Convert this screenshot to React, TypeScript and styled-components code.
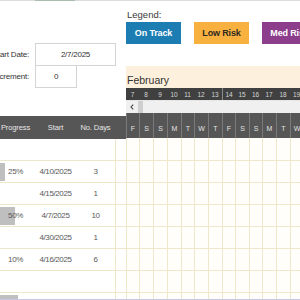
import React from "react";
import styled, { createGlobalStyle } from "styled-components";

const GlobalStyle = createGlobalStyle`
  html, body { margin: 0; padding: 0; background: #ffffff; }
  body { font-family: "Liberation Sans", Arial, sans-serif; }
  * { box-sizing: border-box; }
`;

const GRID_LINE = "#efe7c9";
const COLS = [13, 14, 14, 14, 13, 14, 14, 13, 14, 13, 14, 14, 13];
const COL_TEMPLATE = COLS.map((w) => `${w}px`).join(" ");
const DAYS = [7, 8, 9, 10, 11, 12, 13, 14, 15, 16, 17, 18, 19];
const LETTERS = ["F", "S", "S", "M", "T", "W", "T", "F", "S", "S", "M", "T", "W"];

type Task = { progress?: number; start?: string; days?: string };
const TASKS: Task[] = [
  {},
  { progress: 5, start: "4/10/2025", days: "3" },
  { start: "4/15/2025", days: "1" },
  { progress: 15, start: "4/7/2025", days: "10" },
  { start: "4/30/2025", days: "1" },
  { progress: 0, start: "4/16/2025", days: "6" },
  {},
];
const PCT = ["", "25%", "", "50%", "", "10%", ""];

const Page = styled.div`
  width: 300px;
  height: 300px;
  overflow: hidden;
  background: #ffffff;
  display: flex;
  flex-direction: column;
  border-bottom: 1px solid #c8c8e2;
`;

const TopRule = styled.div`
  height: 1px;
  flex-shrink: 0;
  background: #dcdcdc;
  display: flex;
`;

const RuleSegment = styled.div`
  margin-left: 35px;
  width: 40px;
  background: #a9bcae;
`;

const Main = styled.div`
  flex: 1;
  display: flex;
  overflow: hidden;
`;

const LeftPane = styled.div`
  width: 126px;
  flex-shrink: 0;
  display: flex;
  flex-direction: column;
`;

const FormArea = styled.div`
  height: 115px;
  padding-top: 42px;
  flex-shrink: 0;
`;

const FormRow = styled.div`
  height: 22px;
  display: flex;
  align-items: flex-start;
`;

const FieldLabel = styled.div`
  width: 35px;
  height: 23px;
  padding-right: 6px;
  display: flex;
  justify-content: flex-end;
  align-items: center;
  overflow: hidden;
  white-space: nowrap;
  font-size: 8px;
  letter-spacing: -0.2px;
  color: #333333;
`;

const FieldBox = styled.div<{ $w: number }>`
  width: ${(p) => p.$w}px;
  height: 23px;
  border: 1px solid #d4d4d4;
  background: #ffffff;
  display: flex;
  align-items: center;
  justify-content: center;
  font-size: 8px;
  letter-spacing: -0.25px;
  color: #333333;
  position: relative;
`;

const TableGrid = styled.div<{ $h: number; $dark?: boolean }>`
  height: ${(p) => p.$h}px;
  flex-shrink: 0;
  display: grid;
  grid-template-columns: 31px 49px 31px 4px 11px;
  align-items: stretch;
  background: ${(p) => (p.$dark ? "#565656" : "#ffffff")};
  color: ${(p) => (p.$dark ? "#e6e6e6" : "#5a5a5a")};
  font-size: ${(p) => (p.$dark ? "7.5px" : "8px")};
  letter-spacing: ${(p) => (p.$dark ? "-0.1px" : "-0.4px")};
  border-bottom: ${(p) => (p.$dark ? "none" : `1px solid ${GRID_LINE}`)};
`;

const Cell = styled.div`
  display: flex;
  align-items: center;
  justify-content: center;
  white-space: nowrap;
  position: relative;
`;

const EdgeCell = styled.div<{ $line?: boolean }>`
  border-left: ${(p) => (p.$line ? `1px solid ${GRID_LINE}` : "none")};
`;

const ProgressBar = styled.div`
  position: absolute;
  left: 0;
  top: 2px;
  bottom: 1px;
  background: #bfbfbf;
`;

const CellText = styled.span`
  position: relative;
`;

const RightPane = styled.div`
  flex: 1;
  min-width: 0;
  overflow: hidden;
  display: flex;
  flex-direction: column;
`;

const Legend = styled.div`
  height: 65px;
  flex-shrink: 0;
  padding-top: 8px;
`;

const LegendTitle = styled.div`
  height: 13px;
  padding-left: 1px;
  font-size: 9.5px;
  line-height: 11px;
  color: #3a3a3a;
`;

const LegendRow = styled.div`
  display: flex;
  gap: 13px;
  white-space: nowrap;
`;

const LegendChip = styled.div<{ $bg: string; $fg: string }>`
  width: 55px;
  height: 22px;
  flex-shrink: 0;
  background: ${(p) => p.$bg};
  color: ${(p) => p.$fg};
  font-size: 9px;
  font-weight: bold;
  letter-spacing: -0.15px;
  display: flex;
  align-items: center;
  justify-content: center;
`;

const MonthBand = styled.div`
  height: 22px;
  flex-shrink: 0;
  background: #fdf0dc;
  display: flex;
  align-items: flex-end;
  padding: 0 0 2px 2px;
  font-size: 10.5px;
  color: #333333;
  margin-left: -1px;
`;

const DayGrid = styled.div<{ $h: number; $bg: string }>`
  height: ${(p) => p.$h}px;
  flex-shrink: 0;
  display: grid;
  grid-template-columns: ${COL_TEMPLATE};
  background: ${(p) => p.$bg};
`;

const DayNumber = styled.div<{ $sep?: boolean }>`
  display: flex;
  align-items: center;
  justify-content: center;
  font-size: 6.5px;
  color: #d6d6d6;
  border-left: ${(p) => (p.$sep ? "1px solid #8a8a8a" : "none")};
`;

const ScrollRow = styled.div`
  height: 13px;
  flex-shrink: 0;
  display: flex;
  background: #f0f0f0;
  border-top: 1px solid #e6e6e6;
`;

const ScrollButton = styled.div`
  width: 12px;
  display: flex;
  align-items: center;
  justify-content: center;
`;

const ScrollThumb = styled.div`
  width: 5px;
  background: #cfcfcf;
`;

const DayLetter = styled.div`
  display: flex;
  align-items: center;
  justify-content: center;
  padding-top: 5px;
  font-size: 7px;
  color: #e2e2e2;
  border-left: 1px solid #7a7a7a;
`;

const GanttCell = styled.div`
  border-left: 1px solid ${GRID_LINE};
  border-bottom: 1px solid ${GRID_LINE};
  background: #fffefa;
`;

function ChevronLeft() {
  return (
    <svg width="4" height="6" viewBox="0 0 4 6">
      <path d="M3.2 0.6 L1 3 L3.2 5.4" fill="none" stroke="#444" strokeWidth="1.1" />
    </svg>
  );
}

export default function App() {
  const ganttRowHeights = [23, 22, 22, 22, 22, 22, 22, 22];
  return (
    <>
      <GlobalStyle />
      <Page>
        <TopRule>
          <RuleSegment />
        </TopRule>
        <Main>
          <LeftPane>
            <FormArea>
              <FormRow>
                <FieldLabel>Start Date:</FieldLabel>
                <FieldBox $w={81}>2/7/2025</FieldBox>
              </FormRow>
              <FormRow>
                <FieldLabel>Increment:</FieldLabel>
                <FieldBox $w={42}>0</FieldBox>
              </FormRow>
            </FormArea>
            <TableGrid $h={23} $dark>
              <Cell>Progress</Cell>
              <Cell>Start</Cell>
              <Cell>No. Days</Cell>
              <EdgeCell />
              <EdgeCell />
            </TableGrid>
            {TASKS.map((t, i) => (
              <TableGrid key={i} $h={22}>
                <Cell>
                  {t.progress ? <ProgressBar style={{ width: t.progress }} /> : null}
                  <CellText>{PCT[i]}</CellText>
                </Cell>
                <Cell>{t.start ?? ""}</Cell>
                <Cell>{t.days ?? ""}</Cell>
                <EdgeCell />
                <EdgeCell $line />
              </TableGrid>
            ))}
            <TableGrid $h={8}>
              <Cell>
                <ProgressBar style={{ width: 18 }} />
              </Cell>
              <Cell />
              <Cell />
              <EdgeCell />
              <EdgeCell $line />
            </TableGrid>
          </LeftPane>
          <RightPane>
            <Legend>
              <LegendTitle>Legend:</LegendTitle>
              <LegendRow>
                <LegendChip $bg="#1c7db3" $fg="#ffffff">On Track</LegendChip>
                <LegendChip $bg="#f8b13f" $fg="#2e2a22">Low Risk</LegendChip>
                <LegendChip $bg="#8c3d8b" $fg="#ffffff">Med Risk</LegendChip>
              </LegendRow>
            </Legend>
            <MonthBand>February</MonthBand>
            <DayGrid $h={12} $bg="#404040">
              {DAYS.map((d, i) => (
                <DayNumber key={d} $sep={i === 7}>
                  {d}
                </DayNumber>
              ))}
            </DayGrid>
            <ScrollRow>
              <ScrollButton>
                <ChevronLeft />
              </ScrollButton>
              <ScrollThumb />
            </ScrollRow>
            <DayGrid $h={25} $bg="#565656">
              {LETTERS.map((l, i) => (
                <DayLetter key={i}>{l}</DayLetter>
              ))}
            </DayGrid>
            {ganttRowHeights.map((h, r) => (
              <DayGrid key={r} $h={h} $bg="#fffefa">
                {COLS.map((_, c) => (
                  <GanttCell key={c} />
                ))}
              </DayGrid>
            ))}
          </RightPane>
        </Main>
      </Page>
    </>
  );
}
